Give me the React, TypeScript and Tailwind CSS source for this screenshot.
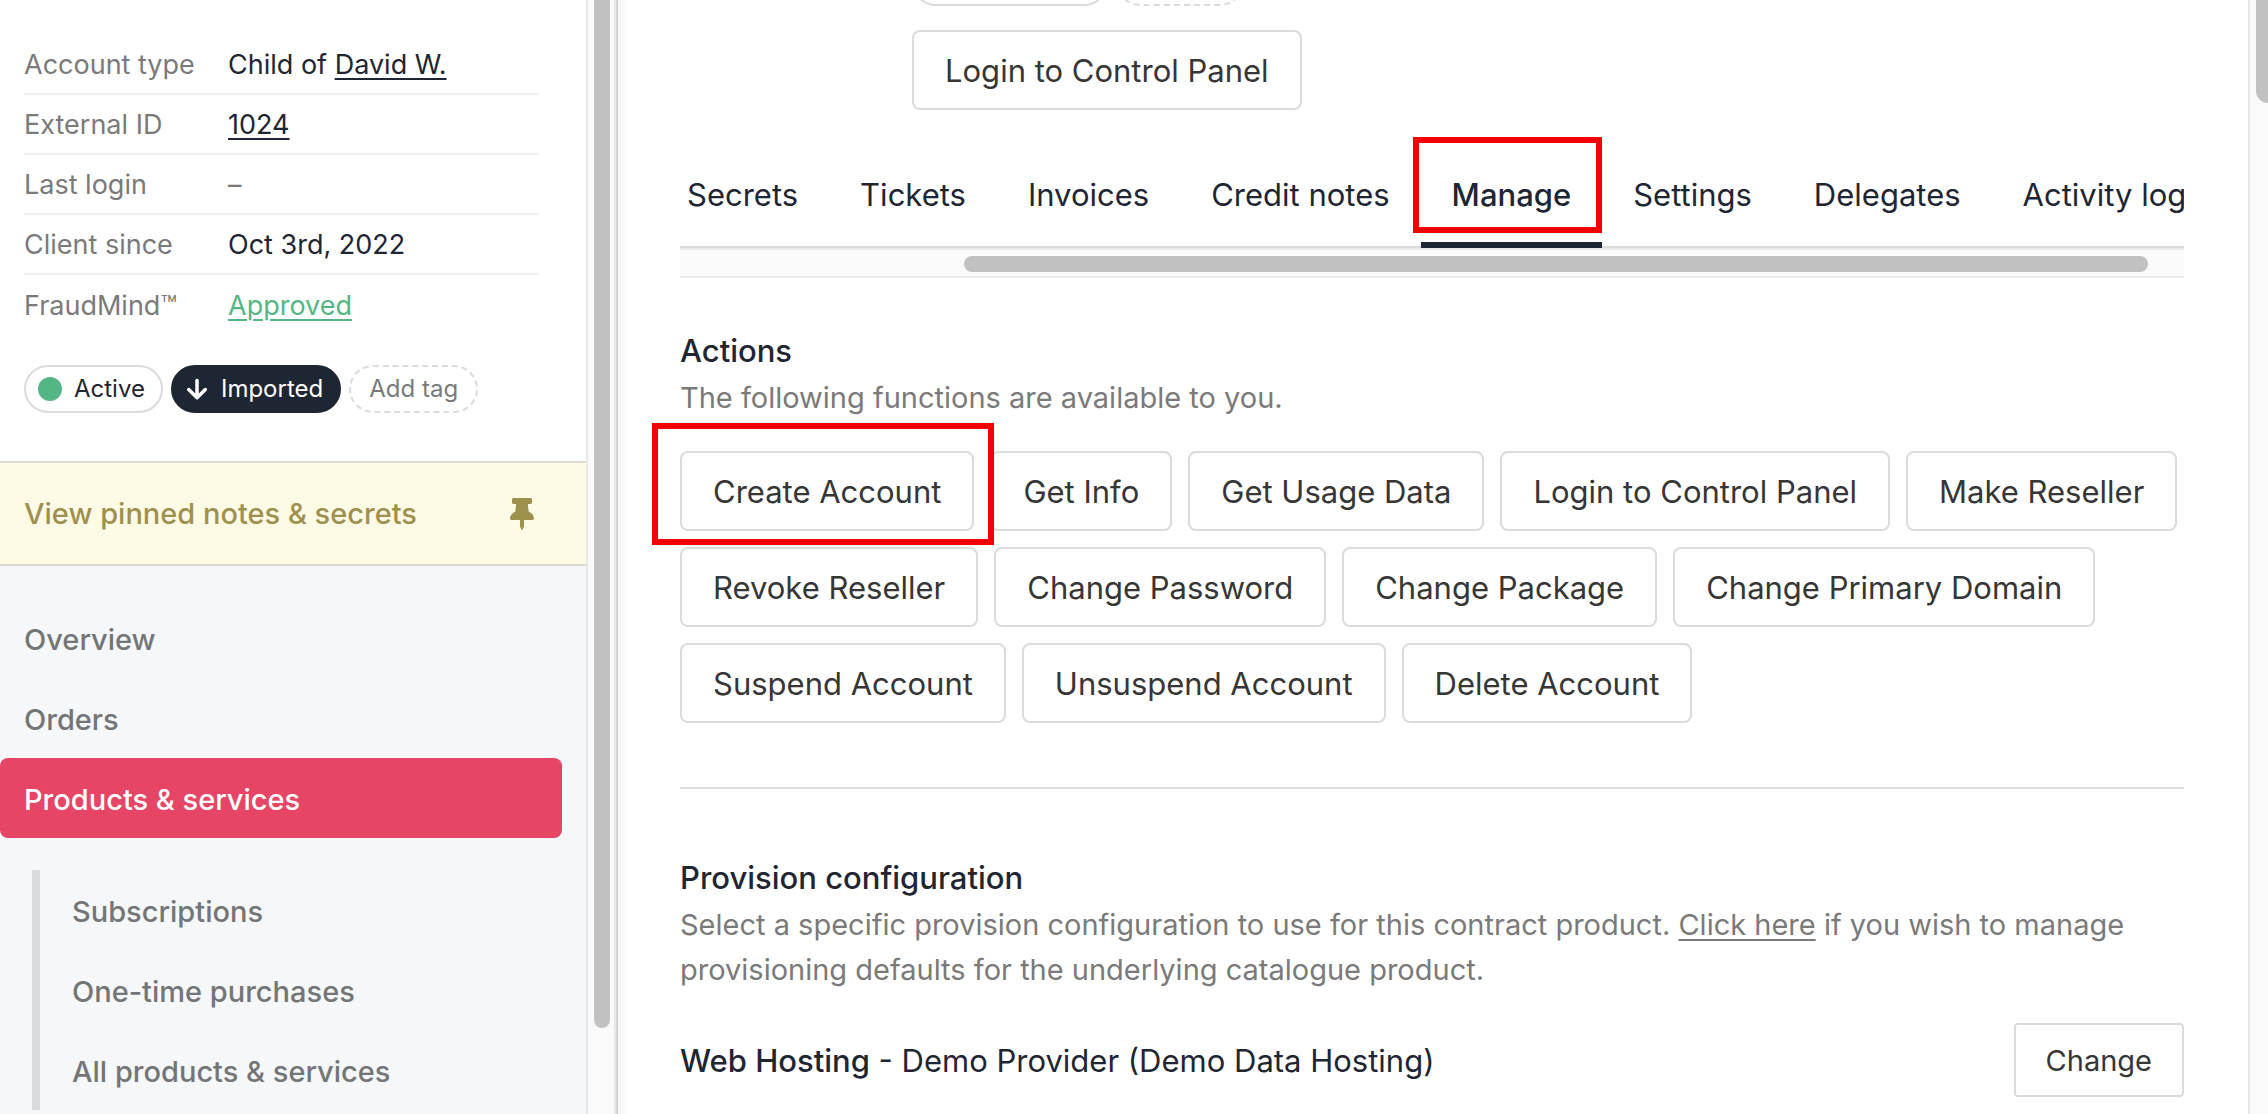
import type { ReactNode } from "react";
import { FaThumbtack } from "react-icons/fa";

const details: { label: string; value: ReactNode }[] = [
  { label: "Account type", value: <>Child of <a href="#" className="underline decoration-2 underline-offset-4">David W.</a></> },
  { label: "External ID", value: <a href="#" className="underline decoration-2 underline-offset-4">1024</a> },
  { label: "Last login", value: <span className="text-[#7a7a7a]">–</span> },
  { label: "Client since", value: "Oct 3rd, 2022" },
  { label: "FraudMind™", value: <a href="#" className="text-[#54b685] underline decoration-2 underline-offset-4">Approved</a> },
];

const tabs = ["Secrets", "Tickets", "Invoices", "Credit notes", "Manage", "Settings", "Delegates", "Activity log"];

const actions = [
  "Create Account",
  "Get Info",
  "Get Usage Data",
  "Login to Control Panel",
  "Make Reseller",
  "Revoke Reseller",
  "Change Password",
  "Change Package",
  "Change Primary Domain",
  "Suspend Account",
  "Unsuspend Account",
  "Delete Account",
];

function ActionButton({ children }: { children: ReactNode }) {
  return (
    <button className="h-20 rounded-lg border-2 border-[#dbdbdb] bg-white px-[31px] pt-0.5 text-[31px] whitespace-nowrap text-[#363636]">
      {children}
    </button>
  );
}

function NavLink({ children, className = "pl-6" }: { children: ReactNode; className?: string }) {
  return (
    <a href="#" className={`flex h-20 items-center pt-1 ${className}`}>
      {children}
    </a>
  );
}

function Sidebar() {
  return (
    <aside className="flex w-[588px] shrink-0 flex-col border-r-2 border-[#e8e8e8] bg-[#f5f7f9]">
      <div className="bg-white pt-[35px] pb-12">
        <dl className="mr-12 ml-6">
          {details.map((row, i) => (
            <div
              key={row.label}
              className={`flex h-[60px] items-center pt-0.5 text-[27px] ${
                i !== details.length - 1 ? "border-b-2 border-[#ededed]" : ""
              }`}
            >
              <dt className="w-[204px] text-[#7a7a7a]">{row.label}</dt>
              <dd className="text-[#1f2633]">{row.value}</dd>
            </div>
          ))}
        </dl>

        <div className="mt-[30px] ml-6 flex gap-2 text-[24px]">
          <span className="flex h-12 items-center gap-3 rounded-full border-2 border-[#dbdbdb] pr-4 pl-3 text-[#1f2633]">
            <span className="size-6 rounded-full bg-[#54b685]" />
            Active
          </span>
          <span className="flex h-12 items-center gap-3 rounded-full border-2 border-[#1f2633] bg-[#1f2633] pr-4 pl-3 text-white">
            <svg viewBox="0 0 24 24" className="size-6" fill="none" stroke="currentColor" strokeWidth="3.5" strokeLinecap="round" strokeLinejoin="round">
              <path d="M12 3.500v17M3.700 12.500 12 20.700l8.300-8.200" />
            </svg>
            Imported
          </span>
          <button className="h-12 rounded-full border-2 border-dashed border-[#dbdbdb] px-[18px] text-[#7a7a7a]">Add tag</button>
        </div>
      </div>

      <a
        href="#"
        className="flex h-[105px] shrink-0 items-center justify-between border-y-2 border-[#dcdcd4] bg-[#fdfae6] pr-[52px] pl-6 text-[29px] font-medium text-[#9f914d]"
      >
        View pinned notes &amp; secrets
        <FaThumbtack className="h-8 w-6" />
      </a>

      <nav className="pt-8 text-[29px] font-medium text-[#737577]">
        <NavLink>Overview</NavLink>
        <NavLink>Orders</NavLink>
        <NavLink className="mr-6 rounded-lg bg-[#e64565] pl-6 text-white">Products &amp; services</NavLink>
        <div className="mt-8 ml-8 border-l-8 border-[#dbdbdb]">
          <NavLink className="pl-8">Subscriptions</NavLink>
          <NavLink className="pl-8">One-time purchases</NavLink>
          <NavLink className="pl-8">All products &amp; services</NavLink>
        </div>
      </nav>
    </aside>
  );
}

function Tabs() {
  return (
    <div className="mt-[26px]">
      {/* strip is scrolled part way along */}
      <div className="overflow-hidden shadow-[inset_0_-2px_0_#dbdbdb]">
        <div role="tablist" className="-ml-6 flex w-max">
          {tabs.map((tab) => (
            <button
              key={tab}
              role="tab"
              aria-selected={tab === "Manage"}
              className={`relative h-28 border-b-6 px-[31px] pt-3 text-[31px] whitespace-nowrap text-[#1f2633] ${
                tab === "Manage" ? "border-[#1f2633] font-medium" : "border-transparent"
              }`}
            >
              {tab}
              {tab === "Manage" && (
                <span className="absolute top-px right-0 -left-2 h-24 border-6 border-[#f50000]" />
              )}
            </button>
          ))}
        </div>
      </div>
      <div className="border-y-2 border-[#ebebeb] bg-[#fafafa] pt-1.5 pr-9 pb-1 pl-[284px]">
        <div className="h-4 rounded-full bg-[#c1c1c1]" />
      </div>
    </div>
  );
}

export default function App() {
  return (
    <div className="flex h-screen overflow-hidden bg-white font-[Inter,sans-serif]">
      <Sidebar />
      <div className="w-[26px] shrink-0 bg-[#fafafa] pl-1.5">
        <div className="h-[1028px] w-4 rounded-b-full bg-[#c1c1c1]" />
      </div>
      <div className="w-1 shrink-0 border-l-2 border-[#e8e8e8] bg-[#d4d4d4]" />

      <main className="min-w-0 grow bg-gradient-to-r from-[#f2f2f2] to-white to-[10px] pr-16 pl-[62px]">
        <div className="ml-[232px]">
          <div className="flex h-1.5 items-end gap-2 overflow-hidden">
            <span className="h-12 w-[196px] rounded-full border-2 border-[#dbdbdb]" />
            <span className="h-12 w-32 rounded-full border-2 border-dashed border-[#dbdbdb]" />
          </div>
          <div className="mt-6">
            <ActionButton>Login to Control Panel</ActionButton>
          </div>
        </div>

        <Tabs />

        <section className="mt-[50px]">
          <h2 className="text-[31px] leading-[45px] font-medium text-[#1f2633]">Actions</h2>
          <p className="mt-0.5 text-[29px] leading-[45px] text-[#7a7a7a]">The following functions are available to you.</p>
          <div className="mt-[31px] flex flex-wrap gap-4">
            {actions.map((action) =>
              action === "Create Account" ? (
                <div key={action} className="relative">
                  <ActionButton>{action}</ActionButton>
                  <span className="absolute -top-7 -right-5 -left-7 z-10 h-[122px] border-6 border-[#f50000]" />
                </div>
              ) : (
                <ActionButton key={action}>{action}</ActionButton>
              )
            )}
          </div>
        </section>

        <hr className="mt-16 border-t-2 border-[#dbdbdb]" />

        <section className="mt-[66px]">
          <h2 className="text-[31px] leading-[45px] font-medium text-[#1f2633]">Provision configuration</h2>
          <p className="mt-0.5 text-[29px] leading-[45px] text-[#7a7a7a]">
            Select a specific provision configuration to use for this contract product.{" "}
            <a href="#" className="underline decoration-2 underline-offset-4">Click here</a> if you wish to manage
            provisioning defaults for the underlying catalogue product.
          </p>
          <div className="mt-[31px] flex items-center justify-between">
            <p className="pt-0.5 text-[31px] text-[#1f2633]">
              <span className="font-medium">Web Hosting</span> - Demo Provider (Demo Data Hosting)
            </p>
            <button className="h-[74px] rounded-sm border-2 border-[#dbdbdb] bg-white px-[30px] pt-0.5 text-[29px] text-[#363636]">Change</button>
          </div>
        </section>
      </main>

      <div className="w-5 shrink-0 border-l-2 border-[#e8e8e8] bg-[#fafafa] pl-1.5">
        <div className="h-[103px] rounded-bl-full bg-[#c1c1c1]" />
      </div>
    </div>
  );
}
